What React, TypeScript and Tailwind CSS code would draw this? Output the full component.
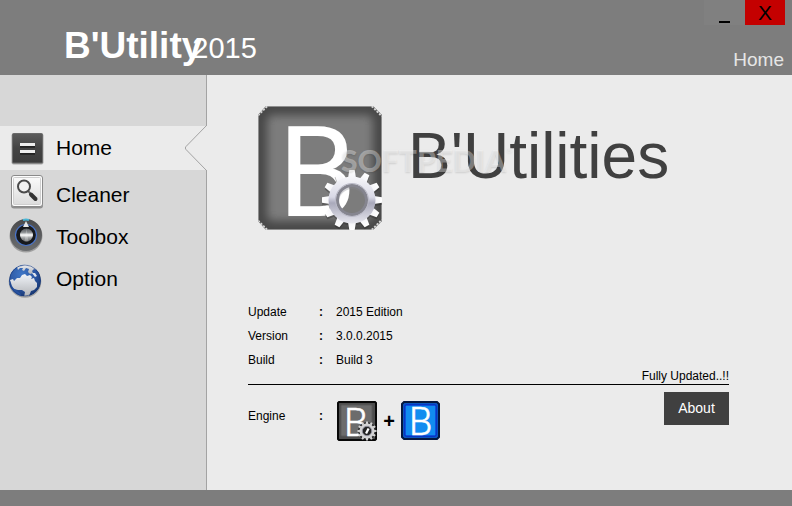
import type { ReactNode } from 'react'
import clsx from 'clsx'

const TEETH = [0, 30, 60, 90, 120, 150, 180, 210, 240, 270, 300, 330]

const INFO = [
  { label: 'Update', value: '2015 Edition' },
  { label: 'Version', value: '3.0.0.2015' },
  { label: 'Build', value: 'Build 3' },
]

function HomeIcon() {
  return (
    <svg width="36" height="40" viewBox="0 0 36 40" aria-hidden="true">
      <defs>
        <linearGradient id="homeBg" x1="0" y1="0" x2="0" y2="1">
          <stop offset="0" stopColor="#5c5c5c" />
          <stop offset="0.5" stopColor="#444" />
          <stop offset="1" stopColor="#3c3c3c" />
        </linearGradient>
      </defs>
      <rect x="3.5" y="5.5" width="32" height="31" rx="2" fill="#a8a8a8" />
      <rect x="4.5" y="5.5" width="30" height="29.5" rx="1" fill="url(#homeBg)" stroke="#6a6a6a" />
      <path d="M12 17.5h15M12 24.5h15" stroke="#222" strokeWidth="4.5" />
      <path d="M12 16.5h15M12 23.5h15" stroke="#eee" strokeWidth="3" />
    </svg>
  )
}

function CleanerIcon() {
  return (
    <svg width="36" height="40" viewBox="0 0 36 40" aria-hidden="true">
      <defs>
        <linearGradient id="cleanBg" x1="0" y1="0" x2="0" y2="1">
          <stop offset="0" stopColor="#fafafa" />
          <stop offset="1" stopColor="#dcdcdc" />
        </linearGradient>
      </defs>
      <rect x="3" y="1.5" width="32" height="32" rx="3" fill="#8f8f8f" />
      <rect x="3.5" y="0.5" width="31" height="31" rx="2.5" fill="#fdfdfd" stroke="#8a8a8a" />
      <rect x="5.5" y="2.5" width="27" height="27" rx="1" fill="url(#cleanBg)" stroke="#cfcfcf" />
      <path d="M20 16l3 3" stroke="#666" strokeWidth="2" />
      <path d="M23 19.5l4.500 4.500" stroke="#333" strokeWidth="4" strokeLinecap="round" />
      <circle cx="16" cy="11.500" r="6" fill="#f3f3f3" stroke="#4b4b4b" strokeWidth="2" />
    </svg>
  )
}

function ToolboxIcon() {
  return (
    <svg width="36" height="40" viewBox="0 0 36 40" aria-hidden="true">
      <defs>
        <linearGradient id="dialRing" x1="0" y1="0" x2="0" y2="1">
          <stop offset="0" stopColor="#4a4a4c" />
          <stop offset="1" stopColor="#6c6e70" />
        </linearGradient>
        <linearGradient id="dialKnob" x1="0" y1="0" x2="0" y2="1">
          <stop offset="0" stopColor="#55585c" />
          <stop offset="0.3" stopColor="#8d9093" />
          <stop offset="0.5" stopColor="#ffffff" />
          <stop offset="0.7" stopColor="#a7a9ab" />
          <stop offset="1" stopColor="#5b5d60" />
        </linearGradient>
      </defs>
      <circle cx="18" cy="19" r="16.500" fill="#888" opacity="0.7" />
      <circle cx="18" cy="18" r="16" fill="url(#dialRing)" />
      <circle cx="18" cy="18" r="10.500" fill="#17191d" stroke="#4a74c8" strokeWidth="1.200" />
      <circle cx="18.500" cy="18" r="6.500" fill="url(#dialKnob)" />
      <path d="M18.500 11.500l-2 13h4z" fill="#fff" opacity="0.25" />
      <path d="M15 3q3-1 6 0" stroke="#49b6d6" strokeWidth="2" fill="none" />
      <path d="M18 4l3 6h-6z" fill="#e8e8e8" />
    </svg>
  )
}

function OptionIcon() {
  return (
    <svg width="36" height="40" viewBox="0 0 36 40" aria-hidden="true">
      <defs>
        <radialGradient id="sea" cx="0.4" cy="0.3" r="0.75">
          <stop offset="0" stopColor="#3f76c6" />
          <stop offset="0.6" stopColor="#2a549f" />
          <stop offset="1" stopColor="#16336b" />
        </radialGradient>
        <linearGradient id="land" x1="0" y1="0" x2="0" y2="1">
          <stop offset="0" stopColor="#f0f3f8" />
          <stop offset="1" stopColor="#b0b2b6" />
        </linearGradient>
        <clipPath id="globe">
          <circle cx="17" cy="21.500" r="16" />
        </clipPath>
      </defs>
      <circle cx="17" cy="22.500" r="16.300" fill="#888" opacity="0.7" />
      <g clipPath="url(#globe)">
        <circle cx="17" cy="21.500" r="16" fill="url(#sea)" />
        <path d="M9 8L18 5L26 7L29 11L26 10L24 12L25 14L22 15L20 13L21 10L18 9L16 12L14 11L15 9L12 9L10 11z" fill="url(#land)" />
        <path
          d="M2 21L5 20L6 22L9 19L12 19L14 16L17 15L19 17L22 16L24 18L23 20L26 19L27 22L29 24L29 28L26 31L23 32L21 37L16 38L17 33L14 31L10 31L6 30L4 27z"
          fill="url(#land)"
        />
        <path d="M24 14L27 14L29 17L27 18z" fill="#dfe4ec" />
        <path d="M1 24L5 29L8 31L12 34L14 38L5 36L0 28z" fill="#2853a0" />
        <circle cx="17" cy="21.500" r="15.500" fill="none" stroke="#1d3c7c" opacity="0.6" />
      </g>
    </svg>
  )
}

// Gear ring centred on the origin, outer radius 30
function Gear({ fill }: { fill: string }) {
  return (
    <g>
      {TEETH.map((angle) => (
        <path key={angle} d="M-4-22L-2.700-30H2.700L4-22z" transform={`rotate(${angle})`} fill={fill} />
      ))}
      <circle r="19" fill="none" stroke={fill} strokeWidth="9" />
      <circle r="14.500" fill="none" stroke="#85858f" strokeWidth="3" />
      <circle r="16.500" fill="none" stroke="#b9b9c6" strokeWidth="1" />
    </g>
  )
}

function Logo() {
  return (
    <svg className="shrink-0" width="126" height="124" viewBox="0 0 126 124" role="img" aria-label="B'Utilities">
      <defs>
        <filter id="soft" x="-10%" y="-10%" width="120%" height="120%">
          <feGaussianBlur stdDeviation="4" />
        </filter>
        <linearGradient id="steel" gradientUnits="userSpaceOnUse" x1="0" y1="-30" x2="0" y2="30">
          <stop offset="0" stopColor="#ffffff" />
          <stop offset="0.45" stopColor="#d9d9e6" />
          <stop offset="0.55" stopColor="#a9a9bb" />
          <stop offset="1" stopColor="#fbfbff" />
        </linearGradient>
        <clipPath id="logoClip">
          <path d="M8 0H115L124 9V115L115 124H8L0 115V9z" />
        </clipPath>
      </defs>
      <g clipPath="url(#logoClip)">
        <rect width="124" height="124" fill="#484848" />
        <rect x="9" y="9" width="106" height="106" rx="6" fill="#7b7b7b" filter="url(#soft)" />
        <path d="M8 .500H115L123.500 9V115L115 123.500H8L.500 115V9z" fill="none" stroke="#8f8f8f" />
        <path d="M0 9L9 0M114 0L124 10M0 115L9 124M114 124L124 114" fill="none" stroke="#d5d5d5" strokeWidth="2.500" strokeDasharray="2 1.500" />
      </g>
      <text x="20" y="110" fontFamily="Roboto, sans-serif" fontSize="126" fill="#fff">B</text>
      <g transform="translate(94 94)">
        <g transform="translate(0 2)" opacity="0.35">
          <Gear fill="#222" />
        </g>
        <Gear fill="url(#steel)" />
      </g>
    </svg>
  )
}

function GreyEngine() {
  return (
    <svg width="40" height="40" viewBox="0 0 40 40" role="img" aria-label="Grey engine">
      <path d="M2 1H38L39 2V38L38 39H2L1 38V2z" fill="#4d4d4d" stroke="#080808" strokeWidth="2" />
      <rect x="4" y="4" width="31" height="31" rx="1" fill="#6c6c6c" stroke="#5a5a5a" />
      <text x="7" y="35" fontFamily="Roboto, sans-serif" fontWeight="300" fontSize="39" fill="#fff" stroke="#fff" strokeWidth="0.500">B</text>
      <g transform="translate(30 30) scale(0.32)">
        <circle r="28" fill="#2a2a2a" />
        <Gear fill="#d4d4d4" />
        <circle r="12" fill="#222" />
        <path d="M-3 8L5-8" stroke="#fff" strokeWidth="7" />
      </g>
    </svg>
  )
}

function BlueEngine() {
  return (
    <svg width="40" height="40" viewBox="0 0 40 40" role="img" aria-label="Blue engine">
      <path d="M3 1H36L38 3V36L36 38H3L1 36V3z" fill="#0a55c0" stroke="#041840" strokeWidth="2" />
      <rect x="4" y="4" width="31" height="31" rx="1" fill="#118cf0" stroke="#0618c8" />
      <text x="8" y="34" fontFamily="Roboto, sans-serif" fontWeight="300" fontSize="38" fill="#fff" stroke="#fff" strokeWidth="0.500">B</text>
    </svg>
  )
}

function NavItem({ icon, label, active = false }: { icon: ReactNode; label: string; active?: boolean }) {
  return (
    <a
      href="#"
      aria-current={active ? 'page' : undefined}
      className={clsx('flex items-center gap-3 pl-2 text-[21px] text-black', active ? 'relative h-11 bg-[#ebebeb] mb-1' : 'h-[42px]')}
    >
      {icon}
      {label}
      {active && (
        <svg className="absolute right-[-1px] top-0" width="23" height="44" viewBox="0 0 23 44" aria-hidden="true">
          <path d="M23 0V44H20V0z" fill="#ebebeb" />
          <path d="M22.500-.500L2 20.500Q.500 22 2 23.500L22.500 44.500" fill="none" stroke="#a3a3a3" />
        </svg>
      )}
    </a>
  )
}

export default function App() {
  return (
    <div className="min-h-screen flex flex-col bg-[#ebebeb] font-['Liberation_Sans',Arial,sans-serif] text-black">
      <header className="flex h-[75px] shrink-0 justify-between bg-[#7d7d7d]">
        <div className="flex items-baseline pl-16 pt-[26px] text-white leading-10">
          <span className="text-[37px] font-bold">B'Utility</span>
          <span className="-ml-[10px] text-[29px]">2015</span>
        </div>
        <div className="flex flex-col items-end gap-5">
          <div className="mr-[7px] flex h-[25px] text-[21px] leading-6">
            <button type="button" aria-label="Minimize" className="flex w-[41px] items-end justify-center bg-[#808080] pb-[2px]">
              <span className="h-[2px] w-[11px] bg-black" />
            </button>
            <button type="button" aria-label="Close" className="w-10 bg-[#c40000]">X</button>
          </div>
          <span className="pr-2 text-[19px] leading-[30px] text-[#e6e6e6]">Home</span>
        </div>
      </header>

      <div className="flex flex-1">
        <nav className="w-[207px] shrink-0 border-r border-[#a3a3a3] bg-[#d7d7d7] pt-[51px]">
          <NavItem icon={<HomeIcon />} label="Home" active />
          <NavItem icon={<CleanerIcon />} label="Cleaner" />
          <NavItem icon={<ToolboxIcon />} label="Toolbox" />
          <NavItem icon={<OptionIcon />} label="Option" />
        </nav>

        <main className="flex-1 pl-[41px] pr-[63px] pt-[31px] text-[12px]">
          <div className="relative ml-[10px] flex items-start gap-6">
            <Logo />
            <h1 className="mt-[18px] text-[64px] leading-none text-[#404040]">B'Utilities</h1>
            <div className="absolute left-[83px] top-[38px] flex items-start font-[Lato,sans-serif] leading-8 text-white/35 [text-shadow:0_1px_2px_rgba(0,0,0,0.12)]">
              <span className="text-[30px] font-black">SOFTPEDIA</span>
              <span className="text-[8px] leading-3">®</span>
            </div>
          </div>

          <div className="mt-[70px] flex items-end justify-between border-b border-black">
            <table className="mb-3">
              <tbody>
                {INFO.map((row) => (
                  <tr key={row.label} className="h-6">
                    <th scope="row" className="w-[71px] text-left font-normal">{row.label}</th>
                    <td className="w-[17px] font-bold">:</td>
                    <td>{row.value}</td>
                  </tr>
                ))}
              </tbody>
            </table>
            <span className="leading-4">Fully Updated..!!</span>
          </div>

          <div className="flex items-start justify-between">
            <div className="flex items-start pt-4 leading-[30px]">
              <span className="w-[71px]">Engine</span>
              <span className="w-[18px] font-bold">:</span>
              <GreyEngine />
              <span className="w-6 text-center text-[20px] font-bold leading-10">+</span>
              <BlueEngine />
            </div>
            <button type="button" className="mt-[7px] h-[33px] w-[65px] bg-[#404040] text-[14px] text-white">About</button>
          </div>
        </main>
      </div>

      <footer className="h-4 shrink-0 bg-[#7d7d7d]" />
    </div>
  )
}
